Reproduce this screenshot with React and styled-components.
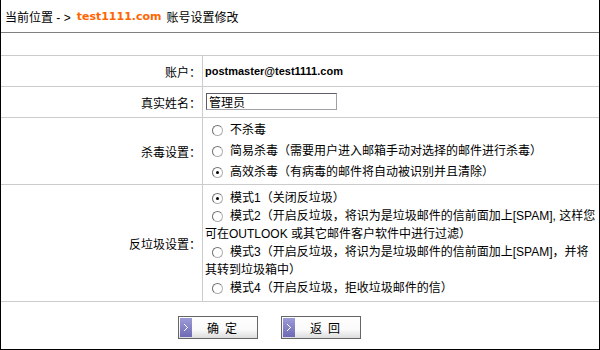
import React, { useState } from 'react';
import styled, { createGlobalStyle } from 'styled-components';

const GlobalStyle = createGlobalStyle`
  body {
    margin: 0;
    background: #fff;
    font-family: "Liberation Sans", "Noto Sans CJK SC", sans-serif;
    font-size: 12px;
    color: #000;
  }
`;

const Frame = styled.div`
  width: 600px;
  height: 350px;
  box-sizing: border-box;
  border: 1px solid #000;
  border-top: none;
  display: flex;
  flex-direction: column;
`;

const Header = styled.div`
  height: 33px;
  box-sizing: border-box;
  border-bottom: 1px solid #808080;
  display: flex;
  align-items: center;
  padding-left: 4px;
  white-space: pre;
`;

const Domain = styled.span`
  color: #ff6600;
  font-family: "DejaVu Sans", sans-serif;
  font-weight: bold;
  font-size: 11px;
  margin: 0 5px 0 6px;
`;

const Spacer = styled.div`
  height: 23px;
  box-sizing: border-box;
  border-bottom: 1px solid #ccc;
`;

const Row = styled.div`
  display: grid;
  grid-template-columns: 202px 1fr;
  height: ${p => p.$h}px;
  box-sizing: border-box;
  border-bottom: 1px solid #ccc;
`;

const Label = styled.div`
  box-sizing: border-box;
  border-right: 1px solid #ccc;
  display: flex;
  align-items: center;
  justify-content: flex-end;
  padding-right: 1px;
`;

const Value = styled.div`
  padding-left: 2px;
  display: flex;
  flex-direction: column;
  justify-content: center;
  line-height: ${p => p.$lh || 18}px;
  white-space: nowrap;
`;

const Account = styled.span`
  font-weight: bold;
  font-size: 11px;
`;

const TextInput = styled.input`
  width: 131px;
  height: 17px;
  box-sizing: border-box;
  margin: 0 0 0 1px;
  padding: 0 2px;
  border: 1px solid #a0a0a8;
  border-top-color: #5c5c68;
  border-left-color: #5c5c68;
  font: 12px "Noto Sans CJK SC", sans-serif;
  outline: none;
`;

const Option = styled.label`
  display: flex;
  align-items: center;
  padding-left: 7px;
  cursor: pointer;
`;

const Wrap = styled.div`
  padding-left: 0;
`;

const Radio = styled.span`
  width: 11px;
  height: 11px;
  box-sizing: border-box;
  border-radius: 50%;
  border: 1px solid #b0b0b0;
  border-top-color: #707070;
  border-left-color: #707070;
  background: #fff;
  margin-right: 7px;
  display: flex;
  align-items: center;
  justify-content: center;
  &::after {
    content: '';
    width: 3px;
    height: 3px;
    border-radius: 50%;
    background: ${p => (p.$on ? '#000' : 'transparent')};
  }
`;

const Buttons = styled.div`
  flex: 1;
  display: flex;
  align-items: flex-start;
  padding: 14px 0 0 177px;
  gap: 23px;
`;

const Button = styled.button`
  width: 80px;
  height: 23px;
  box-sizing: border-box;
  border: 1px solid #666;
  padding: 1px;
  margin: 0;
  display: flex;
  align-items: stretch;
  background: linear-gradient(#fff 0%, #fafafa 60%, #dcdcdc 100%);
  font: 12px "Noto Sans CJK SC", sans-serif;
  cursor: pointer;
`;

const ButtonIcon = styled.span`
  width: 12px;
  background: linear-gradient(#9d9bd6, #6d6ab6);
  display: flex;
  align-items: center;
  justify-content: center;
`;

const ButtonText = styled.span`
  flex: 1;
  display: flex;
  align-items: center;
  padding-left: 15px;
  letter-spacing: 6px;
`;

const Chevron = () => (
  <svg width="5" height="7" viewBox="0 0 5 7" shapeRendering="crispEdges">
    <rect x="0" y="0" width="1" height="1" fill="#fff" />
    <rect x="1" y="1" width="1" height="1" fill="#fff" />
    <rect x="2" y="2" width="1" height="1" fill="#fff" />
    <rect x="3" y="3" width="1" height="1" fill="#fff" />
    <rect x="2" y="4" width="1" height="1" fill="#fff" />
    <rect x="1" y="5" width="1" height="1" fill="#fff" />
    <rect x="0" y="6" width="1" height="1" fill="#fff" />
  </svg>
);

const virusOptions = [
  '不杀毒',
  '简易杀毒（需要用户进入邮箱手动对选择的邮件进行杀毒）',
  '高效杀毒（有病毒的邮件将自动被识别并且清除）',
];

const spamOptions = [
  ['模式1（关闭反垃圾）'],
  ['模式2（开启反垃圾，将识为是垃圾邮件的信前面加上[SPAM], 这样您', '可在OUTLOOK 或其它邮件客户软件中进行过滤）'],
  ['模式3（开启反垃圾，将识为是垃圾邮件的信前面加上[SPAM]，并将', '其转到垃圾箱中）'],
  ['模式4（开启反垃圾，拒收垃圾邮件的信）'],
];

export default function App() {
  const [name, setName] = useState('管理员');
  const [virus, setVirus] = useState(2);
  const [spam, setSpam] = useState(0);

  return (
    <>
      <GlobalStyle />
      <Frame>
        <Header>
          当前位置 - &gt;<Domain>test1111.com</Domain>账号设置修改
        </Header>
        <Spacer />
        <Row $h={31}>
          <Label>账户：</Label>
          <Value>
            <Account>postmaster@test1111.com</Account>
          </Value>
        </Row>
        <Row $h={31}>
          <Label>真实姓名：</Label>
          <Value>
            <div>
              <TextInput value={name} onChange={e => setName(e.target.value)} />
            </div>
          </Value>
        </Row>
        <Row $h={67}>
          <Label>杀毒设置：</Label>
          <Value $lh={21}>
            {virusOptions.map((text, i) => (
              <Option key={text} onClick={() => setVirus(i)}>
                <Radio $on={virus === i} />
                {text}
              </Option>
            ))}
          </Value>
        </Row>
        <Row $h={117}>
          <Label>反垃圾设置：</Label>
          <Value>
            {spamOptions.map(([first, rest], i) => (
              <div key={first}>
                <Option onClick={() => setSpam(i)}>
                  <Radio $on={spam === i} />
                  {first}
                </Option>
                {rest && <Wrap>{rest}</Wrap>}
              </div>
            ))}
          </Value>
        </Row>
        <Buttons>
          <Button>
            <ButtonIcon>
              <Chevron />
            </ButtonIcon>
            <ButtonText>确定</ButtonText>
          </Button>
          <Button>
            <ButtonIcon>
              <Chevron />
            </ButtonIcon>
            <ButtonText>返回</ButtonText>
          </Button>
        </Buttons>
      </Frame>
    </>
  );
}
